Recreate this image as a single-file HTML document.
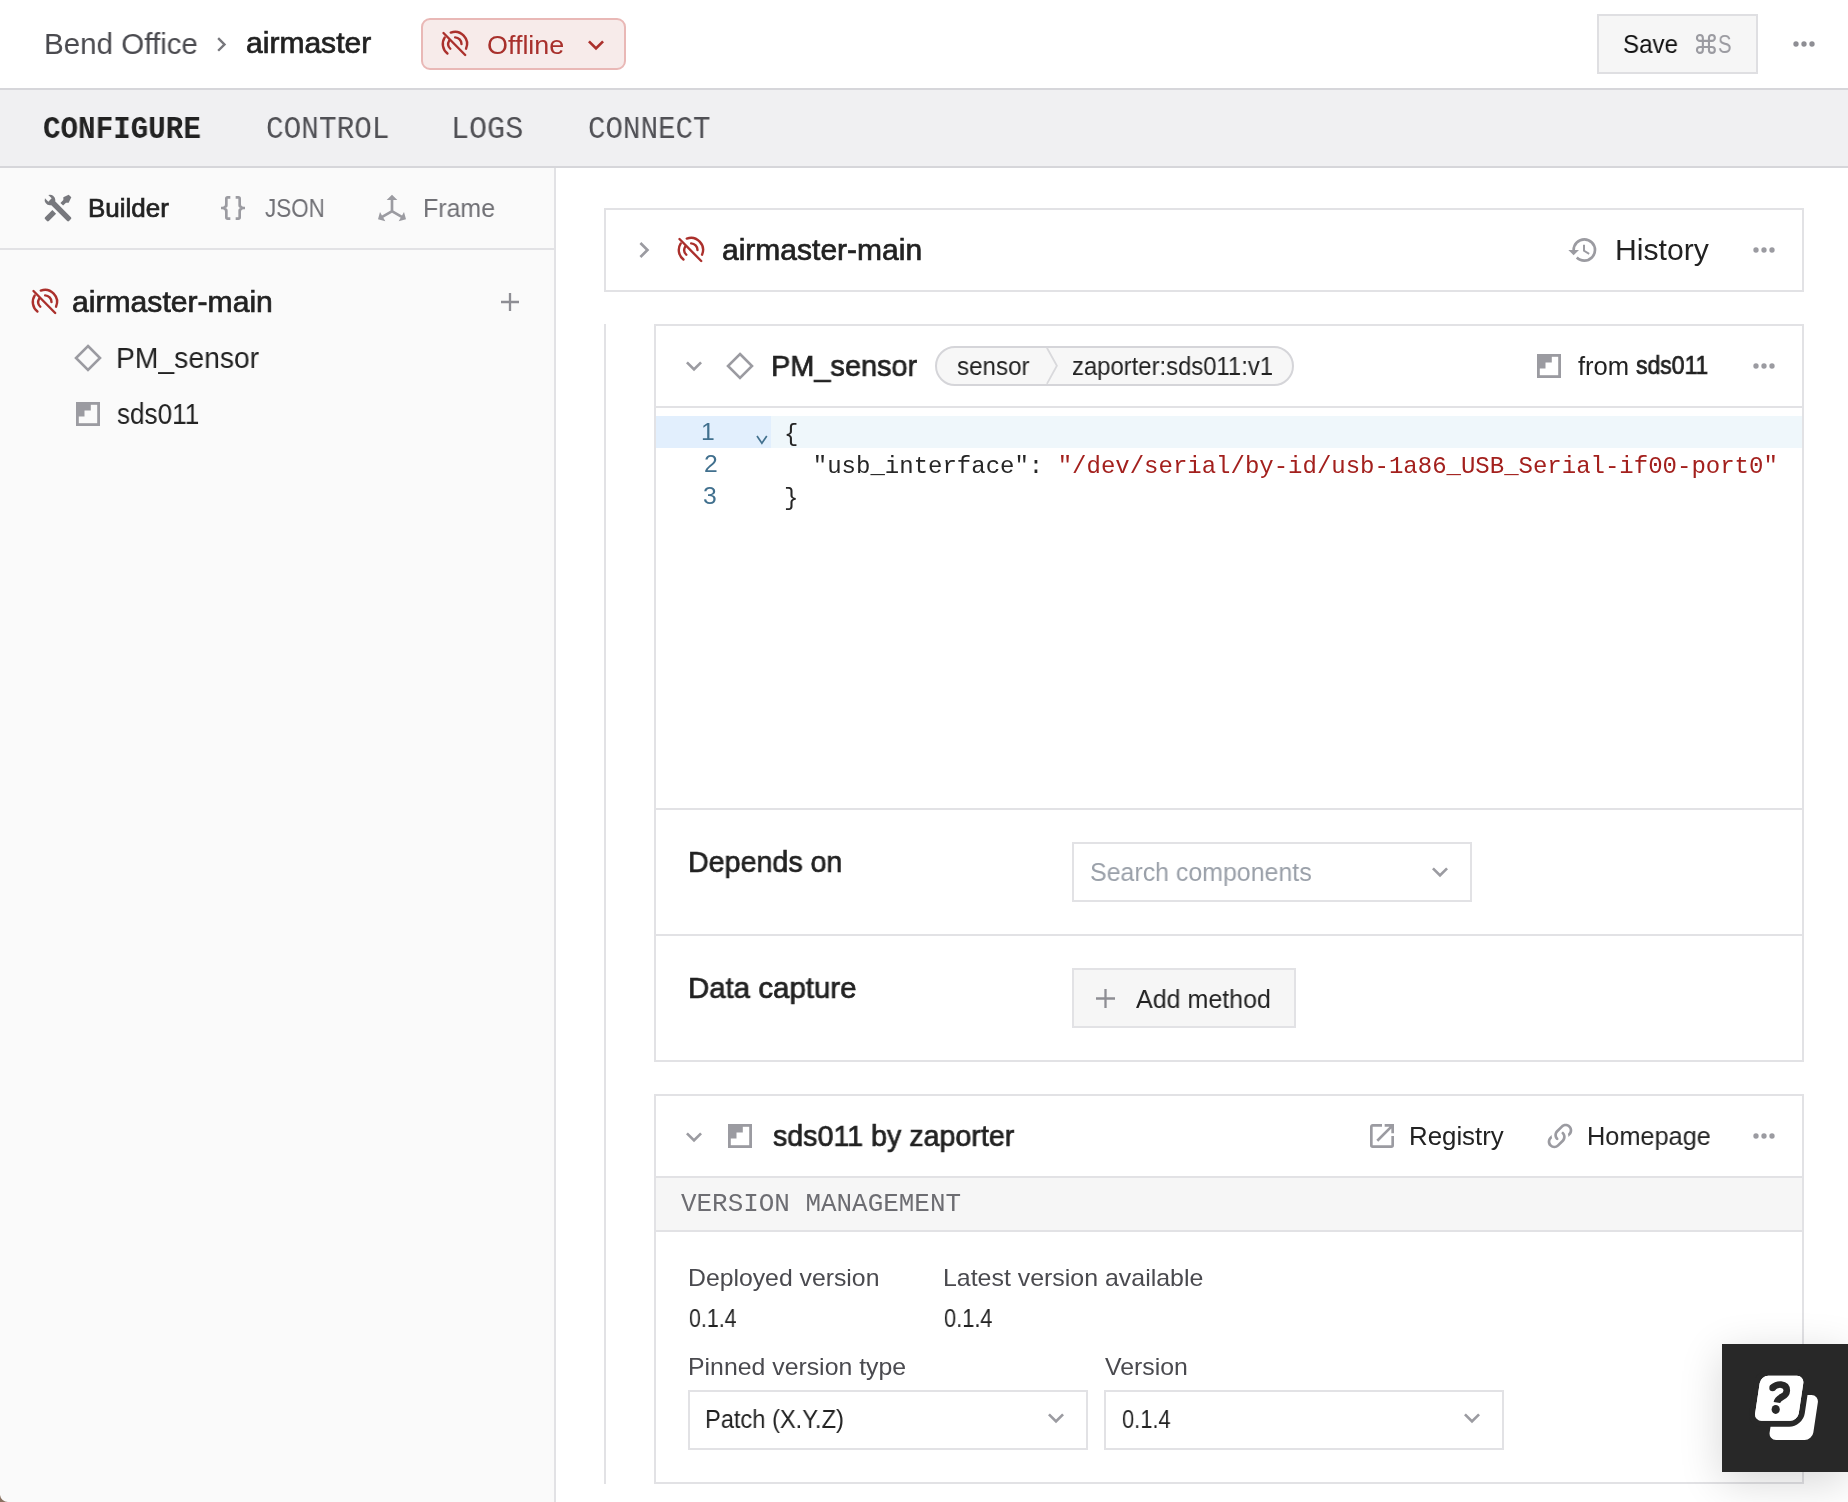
<!DOCTYPE html>
<html><head><meta charset="utf-8"><title>airmaster</title><style>
*{margin:0;padding:0}
html,body{width:1848px;height:1502px;overflow:hidden;background:#fff}
body{position:relative;font-family:"Liberation Sans",sans-serif}
.b{position:absolute}
.i{position:absolute;overflow:visible}
.t{position:absolute;white-space:pre;line-height:1;transform-origin:0 0;will-change:transform}
.code{position:absolute;white-space:pre;line-height:1;will-change:transform;font-family:"Liberation Mono",monospace;font-size:24px;color:#262626}
</style></head>
<body>
<div class="b" style="left:0px;top:0px;width:1848px;height:88px;background:#fff"></div>
<div class="b" style="left:0px;top:88px;width:1848px;height:2px;background:#d6d6da"></div>
<div class="b" style="left:0px;top:90px;width:1848px;height:76px;background:#f0f0f2"></div>
<div class="b" style="left:0px;top:166px;width:1848px;height:2px;background:#d6d6da"></div>
<div class="b" style="left:0px;top:168px;width:554px;height:1334px;background:#fafafa"></div>
<div class="b" style="left:554px;top:168px;width:2px;height:1334px;background:#e2e2e5"></div>
<div class="b" style="left:0px;top:248px;width:554px;height:2px;background:#e2e2e5"></div>
<div class="b" style="left:421px;top:18px;width:205px;height:52px;background:#f7ebea;border:2px solid #e9b8b6;border-radius:9px;box-sizing:border-box"></div>
<svg class="i" style="left:436px;top:24px" width="36" height="38" viewBox="0 0 36 38"><g fill="none" stroke="#ab302c" stroke-width="2.4" stroke-linecap="round"><path d="M14.76 8.63 A12.1 12.1 0 0 1 30.04 24.73"/><path d="M11.45 29.53 A12.1 12.1 0 0 1 8.75 13.41"/><path d="M19.13 13.40 A6.6 6.6 0 0 1 25.50 20.00"/><path d="M14.32 24.75 A6.6 6.6 0 0 1 13.24 16.60"/><line x1="7.5" y1="9.0" x2="29.2" y2="31.0"/></g></svg>
<svg class="i" style="left:580.00px;top:28.56px" width="32.00" height="32.00" viewBox="0 0 24 24"><path d="M7.41,8.58L12,13.17L16.59,8.58L18,10L12,16L6,10L7.41,8.58Z" fill="#ab302c"/></svg>
<svg class="i" style="left:206.70px;top:29.80px" width="28.80" height="28.80" viewBox="0 0 24 24"><path d="M8.59,16.58L13.17,12L8.59,7.41L10,6L16,12L10,18L8.59,16.58Z" fill="#77777c"/></svg>
<div class="b" style="left:1597px;top:14px;width:161px;height:60px;background:#f6f6f6;border:2px solid #dfdfe2;box-sizing:border-box"></div>
<svg class="i" style="left:1787.70px;top:27.50px" width="32.00" height="32.00" viewBox="0 0 24 24"><path d="M16,12A2,2 0 0,1 18,10A2,2 0 0,1 20,12A2,2 0 0,1 18,14A2,2 0 0,1 16,12M10,12A2,2 0 0,1 12,10A2,2 0 0,1 14,12A2,2 0 0,1 12,14A2,2 0 0,1 10,12M4,12A2,2 0 0,1 6,10A2,2 0 0,1 8,12A2,2 0 0,1 6,14A2,2 0 0,1 4,12Z" fill="#8e8e94"/></svg>
<svg class="i" style="left:1690px;top:28px" width="30" height="30" viewBox="0 0 30 30"><path d="M12.85 9.899999999999999 A2.95 2.95 0 1 0 9.899999999999999 12.85 M18.94 9.899999999999999 A2.95 2.95 0 1 1 21.89 12.85 M18.94 21.89 A2.95 2.95 0 1 0 21.89 18.94 M12.85 21.89 A2.95 2.95 0 1 1 9.899999999999999 18.94 M12.85 9.899999999999999 V21.89 M18.94 9.899999999999999 V21.89 M9.899999999999999 12.85 H21.89 M9.899999999999999 18.94 H21.89" fill="none" stroke="#9b9ba1" stroke-width="2.1"/></svg>
<svg class="i" style="left:42.10px;top:191.80px" width="32.00" height="32.00" viewBox="0 0 24 24"><path d="M21.71 20.29L20.29 21.71A1 1 0 0 1 18.88 21.71L7 9.85A3.81 3.81 0 0 1 6 10A4 4 0 0 1 2.22 4.7L4.76 7.24L5.29 6.71L6.71 5.29L7.24 4.76L4.7 2.22A4 4 0 0 1 10 6A3.81 3.81 0 0 1 9.85 7L21.71 18.88A1 1 0 0 1 21.71 20.29M2.29 18.88A1 1 0 0 0 2.29 20.29L3.71 21.71A1 1 0 0 0 5.12 21.71L10.59 16.25L7.76 13.42M20 2L16 4V6L13.83 8.17L15.83 10.17L18 8H20L22 4Z" fill="#77787d"/></svg>
<svg class="i" style="left:217.00px;top:192.00px" width="32.00" height="32.00" viewBox="0 0 24 24"><path d="M8,3A2,2 0 0,0 6,5V9A2,2 0 0,1 4,11H3V13H4A2,2 0 0,1 6,15V19A2,2 0 0,0 8,21H10V19H8V14A2,2 0 0,0 6,12A2,2 0 0,0 8,10V5H10V3M16,3A2,2 0 0,1 18,5V9A2,2 0 0,0 20,11H21V13H20A2,2 0 0,0 18,15V19A2,2 0 0,1 16,21H14V19H16V14A2,2 0 0,1 18,12A2,2 0 0,1 16,10V5H14V3H16Z" fill="#9b9ba1"/></svg>
<svg class="i" style="left:376.00px;top:192.30px" width="32.00" height="32.00" viewBox="0 0 24 24"><path d="M12,2L16,6H13V13.85L19.53,17.61L21,15.03L22.5,20.5L17,21.96L18.53,19.35L12,15.58L5.47,19.35L7,21.96L1.5,20.5L3,15.03L4.47,17.61L11,13.85V6H8L12,2Z" fill="#9b9ba1"/></svg>
<svg class="i" style="left:25.85px;top:281.75px" width="36" height="38" viewBox="0 0 36 38"><g fill="none" stroke="#ab302c" stroke-width="2.4" stroke-linecap="round"><path d="M14.76 8.63 A12.1 12.1 0 0 1 30.04 24.73"/><path d="M11.45 29.53 A12.1 12.1 0 0 1 8.75 13.41"/><path d="M19.13 13.40 A6.6 6.6 0 0 1 25.50 20.00"/><path d="M14.32 24.75 A6.6 6.6 0 0 1 13.24 16.60"/><line x1="7.5" y1="9.0" x2="29.2" y2="31.0"/></g></svg>
<svg class="i" style="left:501.0px;top:293.0px" width="18" height="18" viewBox="0 0 18 18"><path d="M9.0 0 V18 M0 9.0 H18" stroke="#8e8e94" stroke-width="2.3"/></svg>
<svg class="i" style="left:74px;top:344px" width="28" height="28" viewBox="0 0 28 28"><path d="M14.0 2 L26 14.0 L14.0 26 L2 14.0 Z" fill="none" stroke="#9b9ba1" stroke-width="2.6" stroke-linejoin="miter"/></svg>
<svg class="i" style="left:76px;top:402px" width="24" height="24" viewBox="0 0 24 24"><rect x="1.4" y="1.4" width="21.2" height="21.2" fill="none" stroke="#9b9ba1" stroke-width="2.8"/>
<path d="M1 1 H14.8 V8.6 H8.5 V14.6 H1 Z" fill="#9b9ba1"/></svg>
<div class="b" style="left:604px;top:324px;width:2px;height:1160px;background:#e2e2e5"></div>
<div class="b" style="left:604px;top:208px;width:1200px;height:84px;background:#fff;border:2px solid #e2e2e5;box-sizing:border-box"></div>
<svg class="i" style="left:628.00px;top:234.00px" width="32.00" height="32.00" viewBox="0 0 24 24"><path d="M8.59,16.58L13.17,12L8.59,7.41L10,6L16,12L10,18L8.59,16.58Z" fill="#9b9ba1"/></svg>
<svg class="i" style="left:671.65px;top:229.6px" width="36" height="38" viewBox="0 0 36 38"><g fill="none" stroke="#ab302c" stroke-width="2.4" stroke-linecap="round"><path d="M14.76 8.63 A12.1 12.1 0 0 1 30.04 24.73"/><path d="M11.45 29.53 A12.1 12.1 0 0 1 8.75 13.41"/><path d="M19.13 13.40 A6.6 6.6 0 0 1 25.50 20.00"/><path d="M14.32 24.75 A6.6 6.6 0 0 1 13.24 16.60"/><line x1="7.5" y1="9.0" x2="29.2" y2="31.0"/></g></svg>
<svg class="i" style="left:1567.40px;top:233.60px" width="32.00" height="32.00" viewBox="0 0 24 24"><path d="M13.5,8H12V13L16.28,15.54L17,14.33L13.5,12.25V8M13,3A9,9 0 0,0 4,12H1L4.96,16.03L9,12H6A7,7 0 0,1 13,5A7,7 0 0,1 20,12A7,7 0 0,1 13,19C11.07,19 9.320,18.21 8.06,16.94L6.64,18.36C8.27,20 10.5,21 13,21A9,9 0 0,0 22,12A9,9 0 0,0 13,3" fill="#9b9ba1"/></svg>
<svg class="i" style="left:1747.70px;top:234.00px" width="32.00" height="32.00" viewBox="0 0 24 24"><path d="M16,12A2,2 0 0,1 18,10A2,2 0 0,1 20,12A2,2 0 0,1 18,14A2,2 0 0,1 16,12M10,12A2,2 0 0,1 12,10A2,2 0 0,1 14,12A2,2 0 0,1 12,14A2,2 0 0,1 10,12M4,12A2,2 0 0,1 6,10A2,2 0 0,1 8,12A2,2 0 0,1 6,14A2,2 0 0,1 4,12Z" fill="#9b9ba1"/></svg>
<div class="b" style="left:654px;top:324px;width:1150px;height:738px;background:#fff;border:2px solid #e2e2e5;box-sizing:border-box"></div>
<div class="b" style="left:656px;top:406px;width:1146px;height:2px;background:#e2e2e5"></div>
<svg class="i" style="left:678.00px;top:349.60px" width="32.00" height="32.00" viewBox="0 0 24 24"><path d="M7.41,8.58L12,13.17L16.59,8.58L18,10L12,16L6,10L7.41,8.58Z" fill="#9b9ba1"/></svg>
<svg class="i" style="left:726px;top:352px" width="28" height="28" viewBox="0 0 28 28"><path d="M14.0 2 L26 14.0 L14.0 26 L2 14.0 Z" fill="none" stroke="#9b9ba1" stroke-width="2.6" stroke-linejoin="miter"/></svg>
<div class="b" style="left:935px;top:346px;width:359px;height:40px;background:#f7f7f7;border:2px solid #d5d5d9;border-radius:20px;box-sizing:border-box"></div>
<svg class="i" style="left:1040px;top:346px" width="24" height="40" viewBox="0 0 24 40"><polyline points="6.9,1.8 16.9,19.8 6.9,37.9" fill="none" stroke="#d9d9dc" stroke-width="1.8"/></svg>
<svg class="i" style="left:1537px;top:354px" width="24" height="24" viewBox="0 0 24 24"><rect x="1.4" y="1.4" width="21.2" height="21.2" fill="none" stroke="#9b9ba1" stroke-width="2.8"/>
<path d="M1 1 H14.8 V8.6 H8.5 V14.6 H1 Z" fill="#9b9ba1"/></svg>
<svg class="i" style="left:1747.70px;top:350.00px" width="32.00" height="32.00" viewBox="0 0 24 24"><path d="M16,12A2,2 0 0,1 18,10A2,2 0 0,1 20,12A2,2 0 0,1 18,14A2,2 0 0,1 16,12M10,12A2,2 0 0,1 12,10A2,2 0 0,1 14,12A2,2 0 0,1 12,14A2,2 0 0,1 10,12M4,12A2,2 0 0,1 6,10A2,2 0 0,1 8,12A2,2 0 0,1 6,14A2,2 0 0,1 4,12Z" fill="#9b9ba1"/></svg>
<div class="b" style="left:656px;top:416px;width:115px;height:32px;background:#e2effd"></div>
<div class="b" style="left:771px;top:416px;width:1031px;height:32px;background:#eff7fb"></div>
<svg class="i" style="left:754.7px;top:434.0px" width="13.8" height="11.2" viewBox="0 0 13.8 11.2"><polyline points="2,2 6.9,9.2 11.8,2" fill="none" stroke="#41708e" stroke-width="1.7"/></svg>
<div class="b" style="left:656px;top:808px;width:1146px;height:2px;background:#e2e2e5"></div>
<div class="b" style="left:1072px;top:842px;width:400px;height:60px;background:#fff;border:2px solid #e2e2e5;box-sizing:border-box"></div>
<svg class="i" style="left:1424.00px;top:855.60px" width="32.00" height="32.00" viewBox="0 0 24 24"><path d="M7.41,8.58L12,13.17L16.59,8.58L18,10L12,16L6,10L7.41,8.58Z" fill="#9b9ba1"/></svg>
<div class="b" style="left:656px;top:934px;width:1146px;height:2px;background:#e2e2e5"></div>
<div class="b" style="left:1072px;top:968px;width:224px;height:60px;background:#f6f6f6;border:2px solid #e2e2e5;box-sizing:border-box"></div>
<svg class="i" style="left:1096.0px;top:989.0px" width="19" height="19" viewBox="0 0 19 19"><path d="M9.5 0 V19 M0 9.5 H19" stroke="#8e8e94" stroke-width="2.3"/></svg>
<div class="b" style="left:654px;top:1094px;width:1150px;height:390px;background:#fff;border:2px solid #e2e2e5;box-sizing:border-box"></div>
<div class="b" style="left:656px;top:1176px;width:1146px;height:56px;background:#f6f6f6"></div>
<div class="b" style="left:656px;top:1176px;width:1146px;height:2px;background:#e2e2e5"></div>
<div class="b" style="left:656px;top:1230px;width:1146px;height:2px;background:#e2e2e5"></div>
<svg class="i" style="left:678.00px;top:1120.60px" width="32.00" height="32.00" viewBox="0 0 24 24"><path d="M7.41,8.58L12,13.17L16.59,8.58L18,10L12,16L6,10L7.41,8.58Z" fill="#9b9ba1"/></svg>
<svg class="i" style="left:728px;top:1124px" width="24" height="24" viewBox="0 0 24 24"><rect x="1.4" y="1.4" width="21.2" height="21.2" fill="none" stroke="#9b9ba1" stroke-width="2.8"/>
<path d="M1 1 H14.8 V8.6 H8.5 V14.6 H1 Z" fill="#9b9ba1"/></svg>
<svg class="i" style="left:1366.10px;top:1120.00px" width="32.00" height="32.00" viewBox="0 0 24 24"><path d="M14,3V5H17.59L7.76,14.83L9.17,16.24L19,6.41V10H21V3M19,19H5V5H12V3H5C3.89,3 3,3.9 3,5V19A2,2 0 0,0 5,21H19A2,2 0 0,0 21,19V12H19V19Z" fill="#9b9ba1"/></svg>
<svg class="i" style="left:1543.80px;top:1119.80px" width="32.00" height="32.00" viewBox="0 0 24 24"><path d="M10.59,13.41C11,13.8 11,14.44 10.59,14.83C10.2,15.22 9.56,15.22 9.17,14.83C7.22,12.88 7.22,9.71 9.17,7.76V7.76L12.71,4.22C14.66,2.27 17.83,2.27 19.78,4.22C21.73,6.17 21.73,9.34 19.78,11.29L18.29,12.78C18.3,11.960 18.17,11.14 17.89,10.36L18.36,9.88C19.54,8.71 19.540,6.81 18.36,5.64C17.19,4.46 15.29,4.46 14.12,5.64L10.59,9.17C9.41,10.34 9.41,12.24 10.59,13.41M13.41,9.17C13.8,8.78 14.44,8.78 14.83,9.17C16.78,11.12 16.78,14.29 14.83,16.24V16.24L11.29,19.78C9.34,21.73 6.17,21.73 4.22,19.78C2.27,17.83 2.27,14.66 4.22,12.71L5.71,11.22C5.7,12.04 5.83,12.86 6.11,13.65L5.64,14.12C4.46,15.29 4.46,17.19 5.64,18.36C6.81,19.54 8.71,19.54 9.88,18.36L13.41,14.830C14.59,13.66 14.59,11.76 13.41,10.59C13,10.2 13,9.56 13.41,9.17Z" fill="#9b9ba1"/></svg>
<svg class="i" style="left:1747.70px;top:1120.00px" width="32.00" height="32.00" viewBox="0 0 24 24"><path d="M16,12A2,2 0 0,1 18,10A2,2 0 0,1 20,12A2,2 0 0,1 18,14A2,2 0 0,1 16,12M10,12A2,2 0 0,1 12,10A2,2 0 0,1 14,12A2,2 0 0,1 12,14A2,2 0 0,1 10,12M4,12A2,2 0 0,1 6,10A2,2 0 0,1 8,12A2,2 0 0,1 6,14A2,2 0 0,1 4,12Z" fill="#9b9ba1"/></svg>
<div class="b" style="left:688px;top:1390px;width:400px;height:60px;background:#fff;border:2px solid #e2e2e5;box-sizing:border-box"></div>
<svg class="i" style="left:1040.00px;top:1402.30px" width="32.00" height="32.00" viewBox="0 0 24 24"><path d="M7.41,8.58L12,13.17L16.59,8.58L18,10L12,16L6,10L7.41,8.58Z" fill="#9b9ba1"/></svg>
<div class="b" style="left:1104px;top:1390px;width:400px;height:60px;background:#fff;border:2px solid #e2e2e5;box-sizing:border-box"></div>
<svg class="i" style="left:1456.00px;top:1402.30px" width="32.00" height="32.00" viewBox="0 0 24 24"><path d="M7.41,8.58L12,13.17L16.59,8.58L18,10L12,16L6,10L7.41,8.58Z" fill="#9b9ba1"/></svg>
<svg class="i" style="left:0px;top:1490px" width="12" height="12" viewBox="0 0 12 12"><path d="M0 5 A8 8 0 0 0 8 12 H0 Z" fill="#8a7262"/></svg>
<div class="b" style="left:1722px;top:1344px;width:126px;height:128px;background:#282828;box-shadow:0 10px 44px rgba(0,0,0,0.16)"></div>
<svg class="i" style="left:1745px;top:1365px" width="80" height="85" viewBox="0 0 80 85"><g transform="translate(8.36,0) skewX(-8.53)">
<rect x="26.4" y="30" width="43.7" height="45" rx="7.5" fill="#fff"/>
<rect x="9.05" y="10.75" width="43.6" height="44.95" rx="7.5" fill="#fff" stroke="#282828" stroke-width="12" paint-order="stroke"/>
<rect x="9.05" y="10.75" width="43.6" height="44.95" rx="7.5" fill="#fff"/>
</g>
<path d="M27.4 22.8 Q31.5 19.2 36 19.6 Q41.8 20.2 41.8 25.6 Q41.6 29.6 37.2 31.8 Q32.4 34.2 31.9 37.6" fill="none" stroke="#282828" stroke-width="6.6"/>
<circle cx="27.6" cy="22.9" r="3.3" fill="#282828"/>
<ellipse cx="30.7" cy="44.4" rx="4.1" ry="4.5" fill="#282828"/></svg>
<div class="code" style="left:784px;top:422.61px">{</div>
<div class="code" style="left:784px;top:454.61px">  <span style="color:#262626">"usb_interface"</span>: <span style="color:#a3201d">"/dev/serial/by-id/usb-1a86_USB_Serial-if00-port0"</span></div>
<div class="code" style="left:784px;top:486.61px">}</div>
<div class="t" style="left:43.61px;top:28.65px;font-size:29.7px;font-weight:400;color:#4a4a4f;font-family:'Liberation Sans', sans-serif;transform:scaleX(0.9956);">Bend Office</div>
<div class="t" style="left:246.34px;top:28.15px;font-size:29.7px;font-weight:400;color:#222222;font-family:'Liberation Sans', sans-serif;transform:scaleX(1.0119);-webkit-text-stroke:0.7px #222222;">airmaster</div>
<div class="t" style="left:486.94px;top:32.69px;font-size:25.4px;font-weight:400;color:#a8302c;font-family:'Liberation Sans', sans-serif;transform:scaleX(1.0593);">Offline</div>
<div class="t" style="left:1623.05px;top:32.49px;font-size:25.4px;font-weight:400;color:#111111;font-family:'Liberation Sans', sans-serif;transform:scaleX(0.9506);">Save</div>
<div class="t" style="left:1718.20px;top:32.49px;font-size:25.4px;font-weight:400;color:#9b9ba1;font-family:'Liberation Sans', sans-serif;transform:scaleX(0.8000);">S</div>
<div class="t" style="left:43.44px;top:114.63px;font-size:30.5px;font-weight:700;color:#222222;font-family:'Liberation Mono', monospace;transform:scaleX(0.9582);">CONFIGURE</div>
<div class="t" style="left:265.74px;top:114.63px;font-size:30.5px;font-weight:400;color:#505055;font-family:'Liberation Mono', monospace;transform:scaleX(0.9641);">CONTROL</div>
<div class="t" style="left:451.04px;top:114.63px;font-size:30.5px;font-weight:400;color:#505055;font-family:'Liberation Mono', monospace;transform:scaleX(0.9868);">LOGS</div>
<div class="t" style="left:587.74px;top:114.63px;font-size:30.5px;font-weight:400;color:#505055;font-family:'Liberation Mono', monospace;transform:scaleX(0.9565);">CONNECT</div>
<div class="t" style="left:88.34px;top:195.77px;font-size:25.9px;font-weight:400;color:#222222;font-family:'Liberation Sans', sans-serif;transform:scaleX(1.0042);-webkit-text-stroke:0.7px #222222;">Builder</div>
<div class="t" style="left:265.00px;top:196.49px;font-size:25.4px;font-weight:400;color:#707075;font-family:'Liberation Sans', sans-serif;transform:scaleX(0.8813);">JSON</div>
<div class="t" style="left:423.04px;top:196.49px;font-size:25.4px;font-weight:400;color:#707075;font-family:'Liberation Sans', sans-serif;transform:scaleX(0.9824);">Frame</div>
<div class="t" style="left:72.04px;top:286.95px;font-size:29.7px;font-weight:400;color:#222222;font-family:'Liberation Sans', sans-serif;transform:scaleX(1.0146);-webkit-text-stroke:0.7px #222222;">airmaster-main</div>
<div class="t" style="left:115.79px;top:343.05px;font-size:29.7px;font-weight:400;color:#222222;font-family:'Liberation Sans', sans-serif;transform:scaleX(0.9530);">PM_sensor</div>
<div class="t" style="left:117.00px;top:398.65px;font-size:29.7px;font-weight:400;color:#222222;font-family:'Liberation Sans', sans-serif;transform:scaleX(0.8794);">sds011</div>
<div class="t" style="left:722.34px;top:234.85px;font-size:29.7px;font-weight:400;color:#222222;font-family:'Liberation Sans', sans-serif;transform:scaleX(1.0110);-webkit-text-stroke:0.7px #222222;">airmaster-main</div>
<div class="t" style="left:1615.37px;top:235.05px;font-size:29.7px;font-weight:400;color:#222222;font-family:'Liberation Sans', sans-serif;transform:scaleX(1.0163);">History</div>
<div class="t" style="left:771.40px;top:350.85px;font-size:29.7px;font-weight:400;color:#222222;font-family:'Liberation Sans', sans-serif;transform:scaleX(0.9733);-webkit-text-stroke:0.7px #222222;">PM_sensor</div>
<div class="t" style="left:957.00px;top:353.99px;font-size:25.4px;font-weight:400;color:#222222;font-family:'Liberation Sans', sans-serif;transform:scaleX(0.9511);">sensor</div>
<div class="t" style="left:1072.06px;top:353.99px;font-size:25.4px;font-weight:400;color:#222222;font-family:'Liberation Sans', sans-serif;transform:scaleX(0.9390);">zaporter:sds011:v1</div>
<div class="t" style="left:1578.00px;top:353.89px;font-size:25.4px;font-weight:400;color:#222222;font-family:'Liberation Sans', sans-serif;transform:scaleX(1.0074);">from</div>
<div class="t" style="left:1636.35px;top:353.29px;font-size:25.4px;font-weight:400;color:#222222;font-family:'Liberation Sans', sans-serif;transform:scaleX(0.9040);-webkit-text-stroke:0.7px #222222;">sds011</div>
<div class="t" style="left:701.20px;top:419.89px;font-size:24.7px;font-weight:400;color:#41708e;font-family:'Liberation Sans', sans-serif;">1</div>
<div class="t" style="left:703.90px;top:451.89px;font-size:24.7px;font-weight:400;color:#41708e;font-family:'Liberation Sans', sans-serif;">2</div>
<div class="t" style="left:703.20px;top:483.89px;font-size:24.7px;font-weight:400;color:#41708e;font-family:'Liberation Sans', sans-serif;">3</div>
<div class="t" style="left:687.73px;top:847.27px;font-size:29.8px;font-weight:400;color:#222222;font-family:'Liberation Sans', sans-serif;transform:scaleX(0.9610);-webkit-text-stroke:0.7px #222222;">Depends on</div>
<div class="t" style="left:1090.02px;top:859.69px;font-size:25.4px;font-weight:400;color:#9aa0a9;font-family:'Liberation Sans', sans-serif;transform:scaleX(0.9816);">Search components</div>
<div class="t" style="left:687.67px;top:973.27px;font-size:29.8px;font-weight:400;color:#222222;font-family:'Liberation Sans', sans-serif;transform:scaleX(0.9879);-webkit-text-stroke:0.7px #222222;">Data capture</div>
<div class="t" style="left:1135.60px;top:986.69px;font-size:25.4px;font-weight:400;color:#222222;font-family:'Liberation Sans', sans-serif;transform:scaleX(0.9853);">Add method</div>
<div class="t" style="left:773.35px;top:1121.15px;font-size:29.7px;font-weight:400;color:#222222;font-family:'Liberation Sans', sans-serif;transform:scaleX(0.9637);-webkit-text-stroke:0.7px #222222;">sds011 by zaporter</div>
<div class="t" style="left:1408.97px;top:1123.79px;font-size:25.4px;font-weight:400;color:#222222;font-family:'Liberation Sans', sans-serif;transform:scaleX(1.0172);">Registry</div>
<div class="t" style="left:1587.01px;top:1123.79px;font-size:25.4px;font-weight:400;color:#222222;font-family:'Liberation Sans', sans-serif;transform:scaleX(0.9968);">Homepage</div>
<div class="t" style="left:681.00px;top:1192.03px;font-size:25.8px;font-weight:400;color:#6d6d72;font-family:'Liberation Mono', monospace;transform:scaleX(1.0048);">VERSION MANAGEMENT</div>
<div class="t" style="left:688.27px;top:1266.28px;font-size:24.0px;font-weight:400;color:#4a4a4f;font-family:'Liberation Sans', sans-serif;transform:scaleX(1.0323);">Deployed version</div>
<div class="t" style="left:942.76px;top:1266.28px;font-size:24.0px;font-weight:400;color:#4a4a4f;font-family:'Liberation Sans', sans-serif;transform:scaleX(1.0378);">Latest version available</div>
<div class="t" style="left:689.30px;top:1305.55px;font-size:25.1px;font-weight:400;color:#222222;font-family:'Liberation Sans', sans-serif;transform:scaleX(0.8522);">0.1.4</div>
<div class="t" style="left:943.80px;top:1305.55px;font-size:25.1px;font-weight:400;color:#222222;font-family:'Liberation Sans', sans-serif;transform:scaleX(0.8683);">0.1.4</div>
<div class="t" style="left:688.27px;top:1354.68px;font-size:24.0px;font-weight:400;color:#4a4a4f;font-family:'Liberation Sans', sans-serif;transform:scaleX(1.0346);">Pinned version type</div>
<div class="t" style="left:1105.00px;top:1354.68px;font-size:24.0px;font-weight:400;color:#4a4a4f;font-family:'Liberation Sans', sans-serif;transform:scaleX(1.0343);">Version</div>
<div class="t" style="left:705.14px;top:1407.09px;font-size:25.4px;font-weight:400;color:#222222;font-family:'Liberation Sans', sans-serif;transform:scaleX(0.9310);">Patch (X.Y.Z)</div>
<div class="t" style="left:1122.40px;top:1407.09px;font-size:25.4px;font-weight:400;color:#222222;font-family:'Liberation Sans', sans-serif;transform:scaleX(0.8625);">0.1.4</div>
</body></html>
